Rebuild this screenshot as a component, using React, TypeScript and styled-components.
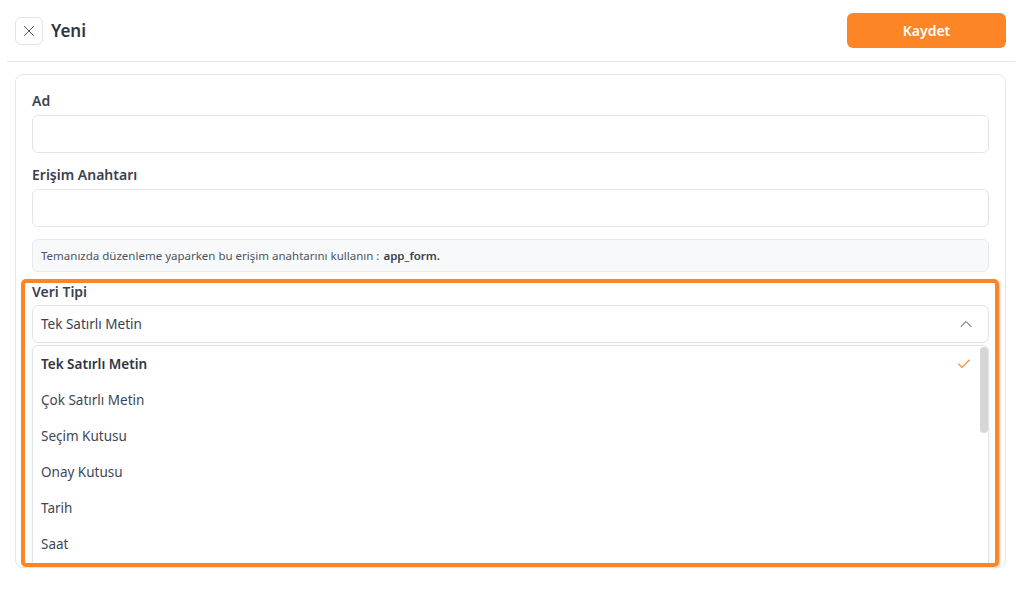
import * as React from 'react'
import styled, { createGlobalStyle } from 'styled-components'
import { X, ChevronUp, Check } from 'lucide-react'

const GlobalStyle = createGlobalStyle`
  html, body {
    margin: 0;
    padding: 0;
    background: #ffffff;
    font-family: "Noto Sans", "Open Sans", sans-serif;
    color: #374151;
  }
  * { box-sizing: border-box; }
`

const options = [
  'Tek Satırlı Metin',
  'Çok Satırlı Metin',
  'Seçim Kutusu',
  'Onay Kutusu',
  'Tarih',
  'Saat',
]

const App: React.FC = () => (
  <StyledPage>
    <GlobalStyle />
    <StyledHeader>
      <StyledTitleGroup>
        <StyledCloseButton>
          <X size={18} strokeWidth={1.3} />
        </StyledCloseButton>
        <StyledTitle>Yeni</StyledTitle>
      </StyledTitleGroup>
      <StyledSaveButton>Kaydet</StyledSaveButton>
    </StyledHeader>

    <StyledCard>
      <StyledGroup>
        <StyledLabel>Ad</StyledLabel>
        <StyledInput />
      </StyledGroup>

      <StyledGroup>
        <StyledLabel>Erişim Anahtarı</StyledLabel>
        <StyledInput />
      </StyledGroup>

      <StyledInfo>
        Temanızda düzenleme yaparken bu erişim anahtarını kullanın : <b>app_form.</b>
      </StyledInfo>

      <StyledGroup>
        <StyledLabel>Veri Tipi</StyledLabel>
        <StyledSelect>
          <span>Tek Satırlı Metin</span>
          <ChevronUp size={20} strokeWidth={1.2} color="#374151" />
        </StyledSelect>
        <StyledMenu>
          {options.map((o, i) => (
            <StyledOption key={o} selected={i === 0}>
              {o}
              {i === 0 && <Check size={16} strokeWidth={1.6} color="#fd8526" />}
            </StyledOption>
          ))}
          <StyledScrollThumb />
        </StyledMenu>
      </StyledGroup>

      <StyledHighlight />
    </StyledCard>
  </StyledPage>
)

const StyledPage = styled.div`
  padding: 0 4px 0 7px;
  width: 1019px;
  height: 589px;
  overflow: hidden;
`

const StyledHeader = styled.div`
  height: 62px;
  display: flex;
  align-items: center;
  justify-content: space-between;
  padding: 0 9px 0 8px;
  border-bottom: 1px solid #e5e7eb;
`

const StyledTitleGroup = styled.div`
  display: flex;
  align-items: center;
  gap: 8px;
`

const StyledCloseButton = styled.button`
  width: 28px;
  height: 28px;
  padding: 0;
  border: 1px solid #e2e4e8;
  border-radius: 6px;
  background: #fff;
  color: #4b5563;
  display: flex;
  align-items: center;
  justify-content: center;
`

const StyledTitle = styled.div`
  font-size: 17px;
  font-weight: 600;
  color: #2f3542;
`

const StyledSaveButton = styled.button`
  width: 159px;
  height: 35px;
  border: none;
  border-radius: 6px;
  background: #fd8526;
  color: #fff;
  font-family: inherit;
  font-size: 14px;
  font-weight: 600;
`

const StyledCard = styled.div`
  position: relative;
  margin: 12px 9px 0 8px;
  height: 494px;
  border: 1px solid #e5e7eb;
  border-radius: 8px;
  padding: 16px 16px 0;
  overflow: hidden;
`

const StyledGroup = styled.div`
  margin-bottom: 12px;
`

const StyledLabel = styled.div`
  font-size: 14px;
  font-weight: 600;
  line-height: 20px;
  color: #3a4150;
  margin-bottom: 4px;
`

const StyledInput = styled.div`
  height: 38px;
  border: 1px solid #e2e4e8;
  border-radius: 6px;
  background: #fff;
`

const StyledInfo = styled.div`
  height: 33px;
  margin-bottom: 10px;
  padding: 0 8px;
  display: flex;
  align-items: center;
  gap: 4px;
  background: #f8f9fb;
  border: 1px solid #e7e9ed;
  border-radius: 6px;
  font-size: 11.5px;
  color: #4b5563;

  b {
    font-weight: 600;
    color: #374151;
  }
`

const StyledSelect = styled.div`
  height: 38px;
  margin-top: -1px;
  padding: 0 12px 0 8px;
  border: 1px solid #e2e4e8;
  border-radius: 6px;
  display: flex;
  align-items: center;
  justify-content: space-between;
  font-size: 13.5px;
  color: #374151;
`

const StyledMenu = styled.div`
  position: relative;
  margin-top: 2px;
  padding: 0 10px 24px 0;
  border: 1px solid #e2e4e8;
  border-radius: 6px;
  box-shadow: 0 2px 6px rgba(0, 0, 0, 0.06);
`

const StyledOption = styled.div<{ selected?: boolean }>`
  height: 36px;
  padding: 0 6px 0 8px;
  display: flex;
  align-items: center;
  justify-content: space-between;
  font-size: 13.5px;
  font-weight: ${props => (props.selected ? 600 : 400)};
  color: ${props => (props.selected ? '#2f3542' : '#3f4654')};
`

const StyledScrollThumb = styled.div`
  position: absolute;
  top: 1px;
  right: 0;
  width: 8px;
  height: 86px;
  border-radius: 4px;
  background: #d6d6d6;
`

const StyledHighlight = styled.div`
  position: absolute;
  left: 5px;
  top: 204px;
  width: 978px;
  height: 288px;
  border: 4px solid #fd8526;
  border-radius: 5px;
  box-shadow: 1px 1px 2px rgba(0, 0, 0, 0.25);
  pointer-events: none;
`

export default App
